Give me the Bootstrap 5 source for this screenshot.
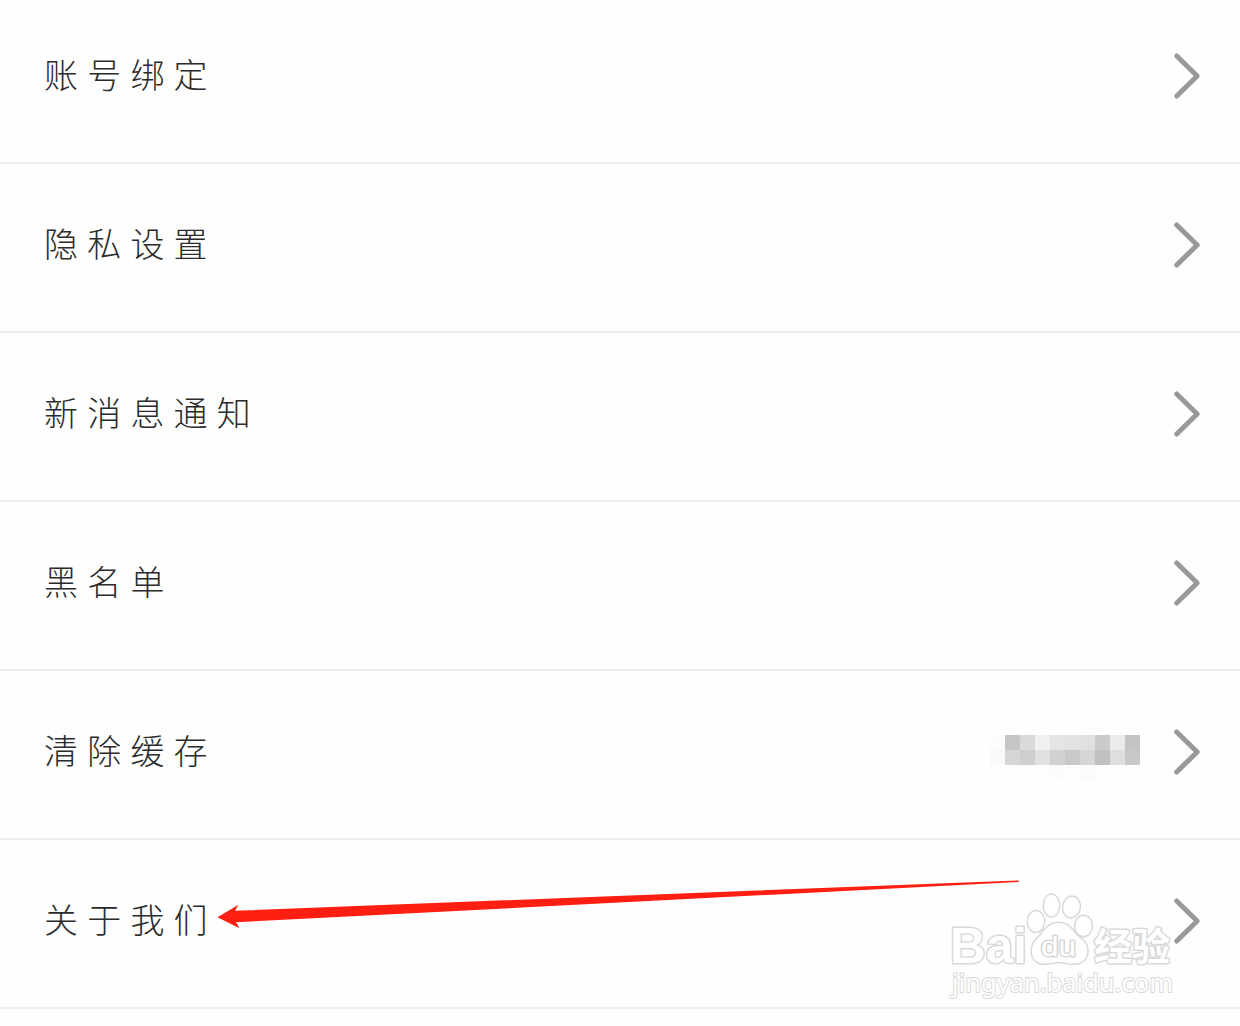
<!DOCTYPE html>
<html lang="zh-CN">

<head>
    <meta charset="UTF-8">
    <meta name="viewport" content="width=device-width, initial-scale=1">
    <title>设置</title>
    <link rel="stylesheet" href="https://cdn.jsdelivr.net/npm/bootstrap@5.3.0/dist/css/bootstrap.min.css">
    <style>
        body {
            background-color: #fefefe;
            font-family: "Liberation Sans", "Noto Sans CJK SC", sans-serif;
            color: #2b2b2b;
        }

        .screen {
            height: 1026px;
        }

        .settings {
            margin-top: -5px;
        }

        .settings .setting-row,
        .settings .setting-row:last-child {
            height: 169px;
            padding: 0 38px 5px 44px;
            background-color: transparent;
            border: 0;
            border-bottom: 2px solid #eee;
            color: inherit;
        }

        .setting-name {
            font-family: "Noto Sans CJK SC", sans-serif;
            font-size: 34px;
            font-weight: 300;
            letter-spacing: 9.2px;
            line-height: 1;
            padding-bottom: 5px;
        }

        .chevron {
            width: 30px;
            height: 50px;
            fill: none;
            stroke: #999;
            stroke-width: 5;
            stroke-linecap: round;
            stroke-linejoin: round;
        }

        .cache-size {
            width: 150px;
            height: 45px;
            margin-right: 32px;
            margin-top: 11px;
        }

        .watermark {
            fill: #fff;
            stroke: #d9d9d9;
            stroke-width: 3;
            stroke-linejoin: round;
            paint-order: stroke;
        }
    </style>
</head>

<body>

    <div class="screen position-relative overflow-hidden">

        <!-- Settings list -->
        <div class="settings list-group list-group-flush" id="settings"></div>

        <!-- Arrow and watermark over the list -->
        <svg class="position-absolute top-0 start-0 pe-none" width="1240" height="1026" viewBox="0 0 1240 1026">
            <path fill="#ff1e12" d="M217.5 917.3L238.5 904.8L235 910.7L1018 880.4Q1020 881.3 1018 882L236 922.3L239.5 928.3Z" />

            <g class="watermark">
                <text x="950" y="963" font-family="Liberation Sans" font-size="50" font-weight="bold" textLength="77" lengthAdjust="spacingAndGlyphs">Bai</text>
                <ellipse cx="1036" cy="921.5" rx="8" ry="10.3" />
                <ellipse cx="1051.5" cy="905.5" rx="7.5" ry="10.8" />
                <ellipse cx="1071.5" cy="907" rx="8.2" ry="10.2" transform="rotate(10 1071.5 907)" />
                <ellipse cx="1083.5" cy="926" rx="8.2" ry="10" />
                <path d="M1059 923C1070 923 1072 932 1080 938C1087 943 1089 951 1086 957C1081 966 1071 964 1059 961.5C1047 964 1038 966 1033 957C1030 950 1033 942 1039 937C1046 930 1048 923 1059 923Z" />
                <text x="1041" y="956" font-family="Liberation Sans" font-size="28" textLength="35" lengthAdjust="spacingAndGlyphs">du</text>
                <text x="1094" y="960" font-family="Noto Sans CJK SC" font-size="38" font-weight="bold" textLength="76" lengthAdjust="spacingAndGlyphs">经验</text>
                <text x="952" y="992" font-family="Noto Sans" font-size="25" stroke-width="2" textLength="221" lengthAdjust="spacingAndGlyphs">jingyan.baidu.com</text>
            </g>
        </svg>
    </div>

    <script src="https://cdn.jsdelivr.net/npm/bootstrap@5.3.0/dist/js/bootstrap.bundle.min.js"></script>
    <script>
        const settings = [
            { name: "账号绑定" },
            { name: "隐私设置" },
            { name: "新消息通知" },
            { name: "黑名单" },
            { name: "清除缓存", masked: true },
            { name: "关于我们" }
        ];

        // Grey levels of the mosaic over the cache size, 15px per cell
        const mosaic = [
            ["#fcfcfc", "#c5c5c5", "#dadada", "#f0f0f0", "#e5e5e5", "#e3e3e3", "#e0e0e0", "#cbcbcb", "#ebebeb", "#c4c4c4"],
            ["#f9f9f9", "#d5d5d5", "#cecece", "#e1e1e1", "#d1d1d1", "#c9c9c9", "#d6d6d6", "#c0c0c0", "#dedede", "#c8c8c8"],
            ["#fefefe", "#fdfdfd", "#fdfdfd", "#fefefe", "#fcfcfc", "#fdfdfd", "#fbfbfb", "#fdfdfd", "#fdfdfd", "#fdfdfd"]
        ];

        function renderMosaic() {
            const cells = mosaic.map((row, y) =>
                row.map((color, x) => `<rect x="${x * 15}" y="${y * 15}" width="15" height="15" fill="${color}" />`).join("")
            ).join("");
            return `<svg class="cache-size" viewBox="0 0 150 45" shape-rendering="crispEdges">${cells}</svg>`;
        }

        document.getElementById("settings").innerHTML = settings.map(item => `
            <div class="setting-row list-group-item d-flex align-items-center">
                <span class="setting-name me-auto">${item.name}</span>
                ${item.masked ? renderMosaic() : ""}
                <svg class="chevron" viewBox="0 0 30 50"><path d="M4.7 5L25.2 25L4.7 45" /></svg>
            </div>
        `).join("");
    </script>

</body>

</html>
